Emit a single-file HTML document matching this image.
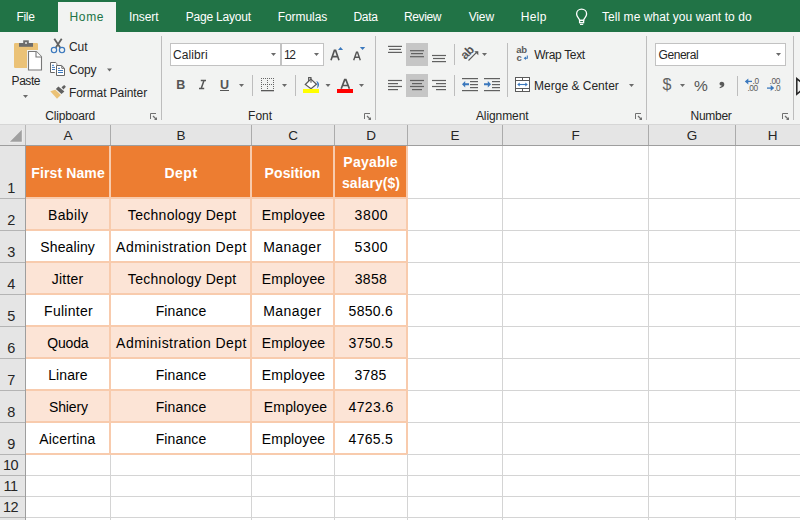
<!DOCTYPE html><html><head><meta charset="utf-8"><style>
html,body{margin:0;padding:0;width:800px;height:520px;overflow:hidden;background:#fff;}
body{position:relative;font-family:"Liberation Sans",sans-serif;}
.t{position:absolute;white-space:nowrap;line-height:20px;z-index:2;}
.c{width:300px;text-align:center;}
.r{position:absolute;}
.ic{position:absolute;left:0;top:0;z-index:1;}
</style></head><body>
<div class="r" style="left:0px;top:0px;width:800px;height:32px;background:#217346;"></div>
<div class="r" style="left:58px;top:2px;width:58px;height:30px;background:#f2f3f2;"></div>
<div class="t" style="left:16.50px;top:6.84px;font-size:12px;color:#ffffff;font-weight:normal;letter-spacing:-0.333px;">File</div>
<div class="t" style="left:129.00px;top:6.84px;font-size:12px;color:#ffffff;font-weight:normal;letter-spacing:-0.100px;">Insert</div>
<div class="t" style="left:185.75px;top:6.84px;font-size:12px;color:#ffffff;font-weight:normal;letter-spacing:-0.200px;">Page Layout</div>
<div class="t" style="left:277.75px;top:6.84px;font-size:12px;color:#ffffff;font-weight:normal;letter-spacing:-0.072px;">Formulas</div>
<div class="t" style="left:353.50px;top:6.84px;font-size:12px;color:#ffffff;font-weight:normal;letter-spacing:-0.333px;">Data</div>
<div class="t" style="left:404.00px;top:6.84px;font-size:12px;color:#ffffff;font-weight:normal;letter-spacing:-0.400px;">Review</div>
<div class="t" style="left:468.75px;top:6.84px;font-size:12px;color:#ffffff;font-weight:normal;letter-spacing:-0.167px;">View</div>
<div class="t" style="left:520.75px;top:6.84px;font-size:12px;color:#ffffff;font-weight:normal;letter-spacing:0.334px;">Help</div>
<div class="t" style="left:602.00px;top:6.84px;font-size:12px;color:#ffffff;font-weight:normal;letter-spacing:0.057px;">Tell me what you want to do</div>
<div class="t" style="left:69.50px;top:6.84px;font-size:12px;color:#217346;font-weight:normal;letter-spacing:0.667px;">Home</div>
<div class="r" style="left:0px;top:32px;width:800px;height:92px;background:#f2f3f2;"></div>
<div class="r" style="left:0px;top:124px;width:800px;height:1px;background:#d6d6d6;"></div>
<div class="r" style="left:161px;top:36px;width:1px;height:84px;background:#bdbdbd;"></div>
<div class="r" style="left:375px;top:36px;width:1px;height:84px;background:#bdbdbd;"></div>
<div class="r" style="left:646px;top:36px;width:1px;height:84px;background:#bdbdbd;"></div>
<div class="r" style="left:793px;top:36px;width:1px;height:84px;background:#bdbdbd;"></div>
<div class="t" style="left:11.60px;top:70.64px;font-size:12px;color:#262626;font-weight:normal;letter-spacing:-0.450px;">Paste</div>
<div class="t" style="left:69.00px;top:36.74px;font-size:12px;color:#262626;font-weight:normal;letter-spacing:-0.100px;">Cut</div>
<div class="t" style="left:69.00px;top:60.04px;font-size:12px;color:#262626;font-weight:normal;letter-spacing:-0.133px;">Copy</div>
<div class="t" style="left:69.00px;top:82.74px;font-size:12px;color:#262626;font-weight:normal;letter-spacing:-0.093px;">Format Painter</div>
<div class="t" style="left:45.30px;top:105.84px;font-size:12px;color:#262626;font-weight:normal;letter-spacing:-0.174px;">Clipboard</div>
<div class="r" style="left:170px;top:43px;width:111px;height:23px;background:#fff;box-sizing:border-box;border:1px solid #c2c2c2;"></div>
<div class="r" style="left:281px;top:43px;width:43px;height:23px;background:#fff;box-sizing:border-box;border:1px solid #c2c2c2;"></div>
<div class="t" style="left:173.00px;top:45.04px;font-size:12px;color:#262626;font-weight:normal;letter-spacing:0.100px;">Calibri</div>
<div class="t" style="left:283.90px;top:45.04px;font-size:12px;color:#262626;font-weight:normal;letter-spacing:-1.400px;">12</div>
<div class="t" style="left:176.20px;top:74.97px;font-size:12.5px;color:#555555;font-weight:bold;letter-spacing:0.000px;">B</div>
<div class="t" style="left:220.00px;top:74.97px;font-size:12.5px;color:#555555;font-weight:bold;letter-spacing:0.000px;">U</div>
<div class="r" style="left:220px;top:90px;width:9px;height:1.2px;background:#555555;"></div>
<div class="r" style="left:252px;top:75px;width:1px;height:21px;background:#bdbdbd;"></div>
<div class="r" style="left:295px;top:75px;width:1px;height:21px;background:#bdbdbd;"></div>
<div class="r" style="left:337px;top:89px;width:16px;height:4px;background:#ff0000;"></div>
<div class="t" style="left:248.10px;top:105.64px;font-size:12px;color:#262626;font-weight:normal;letter-spacing:0.000px;">Font</div>
<div class="r" style="left:406px;top:43px;width:22px;height:23px;background:#c6c6c6;"></div>
<div class="r" style="left:406px;top:74px;width:22px;height:23px;background:#c6c6c6;"></div>
<div class="r" style="left:454px;top:44px;width:1px;height:21px;background:#bdbdbd;"></div>
<div class="r" style="left:454px;top:75px;width:1px;height:21px;background:#bdbdbd;"></div>
<div class="r" style="left:507px;top:43px;width:1px;height:54px;background:#bdbdbd;"></div>
<div class="t" style="left:534.20px;top:44.84px;font-size:12px;color:#262626;font-weight:normal;letter-spacing:-0.325px;">Wrap Text</div>
<div class="t" style="left:534.10px;top:75.64px;font-size:12px;color:#262626;font-weight:normal;letter-spacing:0.000px;">Merge &amp; Center</div>
<div class="t" style="left:475.90px;top:105.59px;font-size:12px;color:#262626;font-weight:normal;letter-spacing:-0.075px;">Alignment</div>
<div class="r" style="left:655px;top:43px;width:131px;height:23px;background:#fff;box-sizing:border-box;border:1px solid #c2c2c2;"></div>
<div class="t" style="left:658.50px;top:44.94px;font-size:12px;color:#262626;font-weight:normal;letter-spacing:-0.434px;">General</div>
<div class="t" style="left:662.60px;top:75.45px;font-size:16px;color:#616161;font-weight:normal;letter-spacing:0.000px;">$</div>
<div class="t" style="left:694.00px;top:75.63px;font-size:15.5px;color:#555555;font-weight:normal;letter-spacing:0.000px;">%</div>
<div class="r" style="left:737px;top:76px;width:1px;height:20px;background:#bdbdbd;"></div>
<div class="t" style="left:690.50px;top:106.04px;font-size:12px;color:#262626;font-weight:normal;letter-spacing:-0.280px;">Number</div>
<div class="r" style="left:0px;top:125px;width:800px;height:20px;background:#e5e5e5;"></div>
<div class="r" style="left:0px;top:145px;width:25px;height:375px;background:#e5e5e5;"></div>
<div class="r" style="left:0px;top:145px;width:800px;height:1px;background:#9e9e9e;"></div>
<div class="r" style="left:25px;top:125px;width:1px;height:20px;background:#b8b8b8;"></div>
<div class="r" style="left:25px;top:145px;width:1px;height:375px;background:#9e9e9e;"></div>
<div class="r" style="left:110px;top:125px;width:1px;height:20px;background:#ababab;"></div>
<div class="r" style="left:251px;top:125px;width:1px;height:20px;background:#ababab;"></div>
<div class="r" style="left:334px;top:125px;width:1px;height:20px;background:#ababab;"></div>
<div class="r" style="left:407px;top:125px;width:1px;height:20px;background:#ababab;"></div>
<div class="r" style="left:502px;top:125px;width:1px;height:20px;background:#ababab;"></div>
<div class="r" style="left:648px;top:125px;width:1px;height:20px;background:#ababab;"></div>
<div class="r" style="left:735px;top:125px;width:1px;height:20px;background:#ababab;"></div>
<div class="t c" style="left:-82.00px;top:126.32px;font-size:13.5px;color:#262626;font-weight:normal;letter-spacing:0.000px;text-indent:0.000px;">A</div>
<div class="t c" style="left:31.00px;top:126.32px;font-size:13.5px;color:#262626;font-weight:normal;letter-spacing:0.000px;text-indent:0.000px;">B</div>
<div class="t c" style="left:143.00px;top:126.32px;font-size:13.5px;color:#262626;font-weight:normal;letter-spacing:0.000px;text-indent:0.000px;">C</div>
<div class="t c" style="left:221.00px;top:126.32px;font-size:13.5px;color:#262626;font-weight:normal;letter-spacing:0.000px;text-indent:0.000px;">D</div>
<div class="t c" style="left:305.00px;top:126.32px;font-size:13.5px;color:#262626;font-weight:normal;letter-spacing:0.000px;text-indent:0.000px;">E</div>
<div class="t c" style="left:425.50px;top:126.32px;font-size:13.5px;color:#262626;font-weight:normal;letter-spacing:0.000px;text-indent:0.000px;">F</div>
<div class="t c" style="left:542.00px;top:126.32px;font-size:13.5px;color:#262626;font-weight:normal;letter-spacing:0.000px;text-indent:0.000px;">G</div>
<div class="t c" style="left:622.50px;top:126.32px;font-size:13.5px;color:#262626;font-weight:normal;letter-spacing:0.000px;text-indent:0.000px;">H</div>
<div class="r" style="left:110px;top:146px;width:1px;height:374px;background:#d4d4d4;"></div>
<div class="r" style="left:251px;top:146px;width:1px;height:374px;background:#d4d4d4;"></div>
<div class="r" style="left:334px;top:146px;width:1px;height:374px;background:#d4d4d4;"></div>
<div class="r" style="left:407px;top:146px;width:1px;height:374px;background:#d4d4d4;"></div>
<div class="r" style="left:502px;top:146px;width:1px;height:374px;background:#d4d4d4;"></div>
<div class="r" style="left:648px;top:146px;width:1px;height:374px;background:#d4d4d4;"></div>
<div class="r" style="left:735px;top:146px;width:1px;height:374px;background:#d4d4d4;"></div>
<div class="r" style="left:26px;top:198px;width:774px;height:1px;background:#d4d4d4;"></div>
<div class="r" style="left:0px;top:198px;width:25px;height:1px;background:#b4b4b4;"></div>
<div class="r" style="left:26px;top:230px;width:774px;height:1px;background:#d4d4d4;"></div>
<div class="r" style="left:0px;top:230px;width:25px;height:1px;background:#b4b4b4;"></div>
<div class="r" style="left:26px;top:262px;width:774px;height:1px;background:#d4d4d4;"></div>
<div class="r" style="left:0px;top:262px;width:25px;height:1px;background:#b4b4b4;"></div>
<div class="r" style="left:26px;top:294px;width:774px;height:1px;background:#d4d4d4;"></div>
<div class="r" style="left:0px;top:294px;width:25px;height:1px;background:#b4b4b4;"></div>
<div class="r" style="left:26px;top:326px;width:774px;height:1px;background:#d4d4d4;"></div>
<div class="r" style="left:0px;top:326px;width:25px;height:1px;background:#b4b4b4;"></div>
<div class="r" style="left:26px;top:358px;width:774px;height:1px;background:#d4d4d4;"></div>
<div class="r" style="left:0px;top:358px;width:25px;height:1px;background:#b4b4b4;"></div>
<div class="r" style="left:26px;top:390px;width:774px;height:1px;background:#d4d4d4;"></div>
<div class="r" style="left:0px;top:390px;width:25px;height:1px;background:#b4b4b4;"></div>
<div class="r" style="left:26px;top:422px;width:774px;height:1px;background:#d4d4d4;"></div>
<div class="r" style="left:0px;top:422px;width:25px;height:1px;background:#b4b4b4;"></div>
<div class="r" style="left:26px;top:454px;width:774px;height:1px;background:#d4d4d4;"></div>
<div class="r" style="left:0px;top:454px;width:25px;height:1px;background:#b4b4b4;"></div>
<div class="r" style="left:26px;top:475px;width:774px;height:1px;background:#d4d4d4;"></div>
<div class="r" style="left:0px;top:475px;width:25px;height:1px;background:#b4b4b4;"></div>
<div class="r" style="left:26px;top:496px;width:774px;height:1px;background:#d4d4d4;"></div>
<div class="r" style="left:0px;top:496px;width:25px;height:1px;background:#b4b4b4;"></div>
<div class="r" style="left:26px;top:517px;width:774px;height:1px;background:#d4d4d4;"></div>
<div class="r" style="left:0px;top:517px;width:25px;height:1px;background:#b4b4b4;"></div>
<div class="t c" style="left:-138.80px;top:178.47px;font-size:14.5px;color:#262626;font-weight:normal;letter-spacing:0.000px;text-indent:0.000px;">1</div>
<div class="t c" style="left:-138.80px;top:210.47px;font-size:14.5px;color:#262626;font-weight:normal;letter-spacing:0.000px;text-indent:0.000px;">2</div>
<div class="t c" style="left:-138.80px;top:242.47px;font-size:14.5px;color:#262626;font-weight:normal;letter-spacing:0.000px;text-indent:0.000px;">3</div>
<div class="t c" style="left:-138.80px;top:274.47px;font-size:14.5px;color:#262626;font-weight:normal;letter-spacing:0.000px;text-indent:0.000px;">4</div>
<div class="t c" style="left:-138.80px;top:306.47px;font-size:14.5px;color:#262626;font-weight:normal;letter-spacing:0.000px;text-indent:0.000px;">5</div>
<div class="t c" style="left:-138.80px;top:338.47px;font-size:14.5px;color:#262626;font-weight:normal;letter-spacing:0.000px;text-indent:0.000px;">6</div>
<div class="t c" style="left:-138.80px;top:370.47px;font-size:14.5px;color:#262626;font-weight:normal;letter-spacing:0.000px;text-indent:0.000px;">7</div>
<div class="t c" style="left:-138.80px;top:402.47px;font-size:14.5px;color:#262626;font-weight:normal;letter-spacing:0.000px;text-indent:0.000px;">8</div>
<div class="t c" style="left:-138.80px;top:434.47px;font-size:14.5px;color:#262626;font-weight:normal;letter-spacing:0.000px;text-indent:0.000px;">9</div>
<div class="t c" style="left:-139.20px;top:455.47px;font-size:14.5px;color:#262626;font-weight:normal;letter-spacing:-0.600px;text-indent:-0.600px;">10</div>
<div class="t c" style="left:-139.20px;top:476.47px;font-size:14.5px;color:#262626;font-weight:normal;letter-spacing:-0.600px;text-indent:-0.600px;">11</div>
<div class="t c" style="left:-139.20px;top:497.47px;font-size:14.5px;color:#262626;font-weight:normal;letter-spacing:-0.600px;text-indent:-0.600px;">12</div>
<div class="r" style="left:26px;top:146px;width:381px;height:52px;background:#ed7d31;"></div>
<div class="r" style="left:26px;top:199px;width:381px;height:31px;background:#fce4d6;"></div>
<div class="r" style="left:26px;top:231px;width:381px;height:31px;background:#fff;"></div>
<div class="r" style="left:26px;top:263px;width:381px;height:31px;background:#fce4d6;"></div>
<div class="r" style="left:26px;top:295px;width:381px;height:31px;background:#fff;"></div>
<div class="r" style="left:26px;top:327px;width:381px;height:31px;background:#fce4d6;"></div>
<div class="r" style="left:26px;top:359px;width:381px;height:31px;background:#fff;"></div>
<div class="r" style="left:26px;top:391px;width:381px;height:31px;background:#fce4d6;"></div>
<div class="r" style="left:26px;top:423px;width:381px;height:31px;background:#fff;"></div>
<div class="r" style="left:109px;top:146px;width:2px;height:308px;background:#f8cbad;"></div>
<div class="r" style="left:250px;top:146px;width:2px;height:308px;background:#f8cbad;"></div>
<div class="r" style="left:333px;top:146px;width:2px;height:308px;background:#f8cbad;"></div>
<div class="r" style="left:406px;top:146px;width:2px;height:308px;background:#f8cbad;"></div>
<div class="r" style="left:26px;top:197px;width:381px;height:2px;background:#f8cbad;"></div>
<div class="r" style="left:26px;top:229px;width:381px;height:2px;background:#f8cbad;"></div>
<div class="r" style="left:26px;top:261px;width:381px;height:2px;background:#f8cbad;"></div>
<div class="r" style="left:26px;top:293px;width:381px;height:2px;background:#f8cbad;"></div>
<div class="r" style="left:26px;top:325px;width:381px;height:2px;background:#f8cbad;"></div>
<div class="r" style="left:26px;top:357px;width:381px;height:2px;background:#f8cbad;"></div>
<div class="r" style="left:26px;top:389px;width:381px;height:2px;background:#f8cbad;"></div>
<div class="r" style="left:26px;top:421px;width:381px;height:2px;background:#f8cbad;"></div>
<div class="r" style="left:26px;top:453px;width:381px;height:2px;background:#f8cbad;"></div>
<div class="t c" style="left:-82.00px;top:163.15px;font-size:14px;color:#fff;font-weight:bold;letter-spacing:0.111px;text-indent:0.111px;">First Name</div>
<div class="t c" style="left:30.76px;top:163.15px;font-size:14px;color:#fff;font-weight:bold;letter-spacing:0.500px;text-indent:0.500px;">Dept</div>
<div class="t c" style="left:142.50px;top:163.15px;font-size:14px;color:#fff;font-weight:bold;letter-spacing:0.085px;text-indent:0.085px;">Position</div>
<div class="t c" style="left:220.50px;top:152.15px;font-size:14px;color:#fff;font-weight:bold;letter-spacing:0.233px;text-indent:0.233px;">Payable</div>
<div class="t c" style="left:221.00px;top:173.15px;font-size:14px;color:#fff;font-weight:bold;letter-spacing:0.050px;text-indent:0.050px;">salary($)</div>
<div class="t c" style="left:-82.00px;top:205.15px;font-size:14px;color:#000;font-weight:normal;letter-spacing:0.400px;text-indent:0.400px;">Babily</div>
<div class="t c" style="left:32.00px;top:205.15px;font-size:14px;color:#000;font-weight:normal;letter-spacing:0.285px;text-indent:0.285px;">Technology Dept</div>
<div class="t c" style="left:143.50px;top:205.15px;font-size:14px;color:#000;font-weight:normal;letter-spacing:0.142px;text-indent:0.142px;">Employee</div>
<div class="t c" style="left:221.10px;top:205.15px;font-size:14px;color:#000;font-weight:normal;letter-spacing:0.600px;text-indent:0.600px;">3800</div>
<div class="t c" style="left:-82.40px;top:237.15px;font-size:14px;color:#000;font-weight:normal;letter-spacing:0.114px;text-indent:0.114px;">Shealiny</div>
<div class="t c" style="left:31.30px;top:237.15px;font-size:14px;color:#000;font-weight:normal;letter-spacing:0.455px;text-indent:0.455px;">Administration Dept</div>
<div class="t c" style="left:142.20px;top:237.15px;font-size:14px;color:#000;font-weight:normal;letter-spacing:0.467px;text-indent:0.467px;">Manager</div>
<div class="t c" style="left:221.10px;top:237.15px;font-size:14px;color:#000;font-weight:normal;letter-spacing:0.600px;text-indent:0.600px;">5300</div>
<div class="t c" style="left:-82.50px;top:269.15px;font-size:14px;color:#000;font-weight:normal;letter-spacing:0.200px;text-indent:0.200px;">Jitter</div>
<div class="t c" style="left:32.00px;top:269.15px;font-size:14px;color:#000;font-weight:normal;letter-spacing:0.285px;text-indent:0.285px;">Technology Dept</div>
<div class="t c" style="left:143.50px;top:269.15px;font-size:14px;color:#000;font-weight:normal;letter-spacing:0.142px;text-indent:0.142px;">Employee</div>
<div class="t c" style="left:220.80px;top:269.15px;font-size:14px;color:#000;font-weight:normal;letter-spacing:0.267px;text-indent:0.267px;">3858</div>
<div class="t c" style="left:-81.60px;top:301.15px;font-size:14px;color:#000;font-weight:normal;letter-spacing:0.286px;text-indent:0.286px;">Fulinter</div>
<div class="t c" style="left:31.00px;top:301.15px;font-size:14px;color:#000;font-weight:normal;letter-spacing:0.133px;text-indent:0.133px;">Finance</div>
<div class="t c" style="left:142.20px;top:301.15px;font-size:14px;color:#000;font-weight:normal;letter-spacing:0.467px;text-indent:0.467px;">Manager</div>
<div class="t c" style="left:220.70px;top:301.15px;font-size:14px;color:#000;font-weight:normal;letter-spacing:0.280px;text-indent:0.280px;">5850.6</div>
<div class="t c" style="left:-82.10px;top:333.15px;font-size:14px;color:#000;font-weight:normal;letter-spacing:-0.150px;text-indent:-0.150px;">Quoda</div>
<div class="t c" style="left:31.30px;top:333.15px;font-size:14px;color:#000;font-weight:normal;letter-spacing:0.455px;text-indent:0.455px;">Administration Dept</div>
<div class="t c" style="left:143.50px;top:333.15px;font-size:14px;color:#000;font-weight:normal;letter-spacing:0.142px;text-indent:0.142px;">Employee</div>
<div class="t c" style="left:220.70px;top:333.15px;font-size:14px;color:#000;font-weight:normal;letter-spacing:0.280px;text-indent:0.280px;">3750.5</div>
<div class="t c" style="left:-82.10px;top:365.15px;font-size:14px;color:#000;font-weight:normal;letter-spacing:0.120px;text-indent:0.120px;">Linare</div>
<div class="t c" style="left:31.00px;top:365.15px;font-size:14px;color:#000;font-weight:normal;letter-spacing:0.133px;text-indent:0.133px;">Finance</div>
<div class="t c" style="left:143.50px;top:365.15px;font-size:14px;color:#000;font-weight:normal;letter-spacing:0.142px;text-indent:0.142px;">Employee</div>
<div class="t c" style="left:220.50px;top:365.15px;font-size:14px;color:#000;font-weight:normal;letter-spacing:0.200px;text-indent:0.200px;">3785</div>
<div class="t c" style="left:-81.50px;top:397.15px;font-size:14px;color:#000;font-weight:normal;letter-spacing:-0.120px;text-indent:-0.120px;">Shiery</div>
<div class="t c" style="left:31.00px;top:397.15px;font-size:14px;color:#000;font-weight:normal;letter-spacing:0.133px;text-indent:0.133px;">Finance</div>
<div class="t c" style="left:145.50px;top:397.15px;font-size:14px;color:#000;font-weight:normal;letter-spacing:0.142px;text-indent:0.142px;">Employee</div>
<div class="t c" style="left:220.90px;top:397.15px;font-size:14px;color:#000;font-weight:normal;letter-spacing:0.360px;text-indent:0.360px;">4723.6</div>
<div class="t c" style="left:-82.80px;top:429.15px;font-size:14px;color:#000;font-weight:normal;letter-spacing:0.200px;text-indent:0.200px;">Aicertina</div>
<div class="t c" style="left:31.00px;top:429.15px;font-size:14px;color:#000;font-weight:normal;letter-spacing:0.133px;text-indent:0.133px;">Finance</div>
<div class="t c" style="left:143.50px;top:429.15px;font-size:14px;color:#000;font-weight:normal;letter-spacing:0.142px;text-indent:0.142px;">Employee</div>
<div class="t c" style="left:220.70px;top:429.15px;font-size:14px;color:#000;font-weight:normal;letter-spacing:0.280px;text-indent:0.280px;">4765.5</div>
<svg class="ic" width="800" height="520" viewBox="0 0 800 520"><path d="M579.6 20.4 C579.4 18.3 576.6 16.9 576.6 14 C576.6 11.2 578.8 9.2 581.6 9.2 C584.4 9.2 586.6 11.2 586.6 14 C586.6 16.9 583.8 18.3 583.6 20.4 Z" fill="none" stroke="#fff" stroke-width="1.3"/><rect x="579.6" y="20.4" width="4" height="2.3" fill="none" stroke="#fff" stroke-width="1.3"/><path d="M580 24.4 H583.2" stroke="#fff" stroke-width="1.1"/><path d="M150.5 119 V113.5 H156" fill="none" stroke="#707070" stroke-width="1"/><path d="M153 116 L156.5 119.5" stroke="#707070" stroke-width="1.2"/><path d="M154 120 H157 V117 Z" fill="#707070"/><path d="M364.5 119 V113.5 H370" fill="none" stroke="#707070" stroke-width="1"/><path d="M367 116 L370.5 119.5" stroke="#707070" stroke-width="1.2"/><path d="M368 120 H371 V117 Z" fill="#707070"/><path d="M635.5 119 V113.5 H641" fill="none" stroke="#707070" stroke-width="1"/><path d="M638 116 L641.5 119.5" stroke="#707070" stroke-width="1.2"/><path d="M639 120 H642 V117 Z" fill="#707070"/><path d="M782.5 119 V113.5 H788" fill="none" stroke="#707070" stroke-width="1"/><path d="M785 116 L788.5 119.5" stroke="#707070" stroke-width="1.2"/><path d="M786 120 H789 V117 Z" fill="#707070"/><rect x="14" y="43" width="24" height="25" rx="1.2" fill="#ebc277"/><path d="M19 43 H33 V46.8 H19 Z" fill="#6d6d6d"/><path d="M23.2 40.3 H28.8 V43.5 H23.2 Z" fill="#6d6d6d"/><rect x="25.2" y="42.2" width="1.6" height="1.6" fill="#fff"/><path d="M27 50 H38.5 V69.5 H27 Z" fill="#f2f3f2"/><path d="M28.5 51.5 H36.3 L41.5 56.7 V70 H28.5 Z" fill="#fff" stroke="#787878" stroke-width="1.1"/><path d="M36 51.5 V57 H41.5" fill="#fff" stroke="#787878" stroke-width="1.1"/><path d="M23 95 H28 L25.5 98 Z" fill="#6a6a6a"/><path d="M54.3 38.8 L60.3 47.8 M61.7 38.8 L55.7 47.8" stroke="#616161" stroke-width="1.8"/><circle cx="54" cy="50.1" r="2.65" fill="none" stroke="#3b78bd" stroke-width="1.2"/><circle cx="62" cy="50.1" r="2.65" fill="none" stroke="#3b78bd" stroke-width="1.2"/><path d="M54.8 72.5 H50.5 V62.5 H55.7 L56.8 63.6 V65" fill="#fff" stroke="#666" stroke-width="1"/><rect x="51" y="63" width="5.3" height="9" fill="#fff"/><path d="M52 65.3 H54 M52 67.4 H55 M52 69.5 H55" stroke="#3b78bd" stroke-width="1"/><path d="M56.5 65.5 H61.7 L64.5 68.3 V75.5 H56.5 Z" fill="#fff" stroke="#666" stroke-width="1"/><path d="M61.8 66 V68.3 H64" fill="none" stroke="#666" stroke-width="1"/><path d="M58 68.4 H60 M58 70.5 H63 M58 72.5 H63" stroke="#3b78bd" stroke-width="1"/><path d="M107 68.5 H112 L109.5 71.5 Z" fill="#6a6a6a"/><path d="M50.3 91.2 L55.3 89.7 L60.9 94.9 L57 98.7 Z" fill="#ebc277"/><path d="M55.9 89 L58.4 86.4 L64.4 91.6 L61.5 94.1 Z" fill="#616161"/><path d="M61.5 87.2 L64.2 85.1 L65.9 86.8 L63.4 89.5 Z" fill="#616161"/><path d="M271 53 H276 L273.5 56 Z" fill="#6a6a6a"/><path d="M314 53 H319 L316.5 56 Z" fill="#6a6a6a"/><path d="M331 60.2 L334.4 50.4 H335.6 L339 60.2 M332.6 56.6 H337.4" fill="none" stroke="#555" stroke-width="1.6"/><path d="M338 49.9 L340.55 46.9 L343.1 49.9 Z" fill="#3b78bd"/><path d="M353.7 60.2 L356.5 52.2 H357.5 L360.3 60.2 M355 57.2 H359" fill="none" stroke="#555" stroke-width="1.4"/><path d="M359.9 46.9 H365.2 L362.55 49.9 Z" fill="#3b78bd"/><path d="M200.8 80.6 H206 M199 88.4 H204.2 M204 80.6 L201.2 88.4" stroke="#555" stroke-width="1.5" fill="none"/><path d="M239 84 H244 L241.5 87 Z" fill="#6a6a6a"/><g fill="#666"><rect x="261" y="78" width="1" height="1"/><rect x="261" y="80" width="1" height="1"/><rect x="261" y="82" width="1" height="1"/><rect x="261" y="84" width="1" height="1"/><rect x="261" y="86" width="1" height="1"/><rect x="261" y="88" width="1" height="1"/><rect x="263" y="78" width="1" height="1"/><rect x="263" y="84" width="1" height="1"/><rect x="265" y="78" width="1" height="1"/><rect x="265" y="84" width="1" height="1"/><rect x="267" y="78" width="1" height="1"/><rect x="267" y="80" width="1" height="1"/><rect x="267" y="82" width="1" height="1"/><rect x="267" y="84" width="1" height="1"/><rect x="267" y="86" width="1" height="1"/><rect x="267" y="88" width="1" height="1"/><rect x="269" y="78" width="1" height="1"/><rect x="269" y="84" width="1" height="1"/><rect x="271" y="78" width="1" height="1"/><rect x="271" y="84" width="1" height="1"/><rect x="273" y="78" width="1" height="1"/><rect x="273" y="80" width="1" height="1"/><rect x="273" y="82" width="1" height="1"/><rect x="273" y="84" width="1" height="1"/><rect x="273" y="86" width="1" height="1"/><rect x="273" y="88" width="1" height="1"/></g><rect x="261" y="90" width="13" height="1.3" fill="#5a5a5a"/><path d="M282 84 H287 L284.5 87 Z" fill="#6a6a6a"/><path d="M305.3 84.5 L310.8 79 L316.5 84.3 L311 88.8 Z" fill="#fff" stroke="#5a5a5a" stroke-width="1.2"/><path d="M308.6 81.3 V77.6 H311 V82.8" stroke="#5a5a5a" stroke-width="1.1" fill="none"/><path d="M316.3 80.9 C319.6 82 320.2 86 316.9 88.3 C317.9 85.6 317.6 83.2 316.3 80.9 Z" fill="#3b78bd"/><rect x="303" y="89" width="16" height="4" fill="#ffff00"/><path d="M325.5 84 H330.5 L328.0 87 Z" fill="#6a6a6a"/><path d="M341.2 88.8 L344.7 79.7 H345.9 L349.4 88.8 M342.8 85.5 H347.8" fill="none" stroke="#555" stroke-width="1.7"/><path d="M359 84 H364 L361.5 87 Z" fill="#6a6a6a"/><rect x="388" y="45.8" width="14" height="1.2" fill="#616161"/><rect x="389" y="48.8" width="12" height="1.2" fill="#616161"/><rect x="388" y="51.8" width="14" height="1.2" fill="#616161"/><rect x="410" y="50.1" width="14" height="1.2" fill="#616161"/><rect x="411" y="53" width="12" height="1.2" fill="#616161"/><rect x="410" y="56.1" width="14" height="1.2" fill="#616161"/><rect x="432" y="54.9" width="14" height="1.2" fill="#616161"/><rect x="433" y="57.9" width="12" height="1.2" fill="#616161"/><rect x="432" y="61" width="14" height="1.2" fill="#616161"/><rect x="388" y="79.9" width="14" height="1.2" fill="#616161"/><rect x="388" y="83" width="10" height="1.2" fill="#616161"/><rect x="388" y="85.9" width="14" height="1.2" fill="#616161"/><rect x="388" y="89" width="10" height="1.2" fill="#616161"/><rect x="410" y="79.9" width="14" height="1.2" fill="#616161"/><rect x="412" y="83" width="10" height="1.2" fill="#616161"/><rect x="410" y="85.9" width="14" height="1.2" fill="#616161"/><rect x="412" y="89" width="10" height="1.2" fill="#616161"/><rect x="432" y="79.9" width="14" height="1.2" fill="#616161"/><rect x="436" y="83" width="10" height="1.2" fill="#616161"/><rect x="432" y="85.9" width="14" height="1.2" fill="#616161"/><rect x="436" y="89" width="10" height="1.2" fill="#616161"/><text x="0" y="0" font-family="Liberation Sans" font-size="12" font-weight="bold" fill="#555" letter-spacing="-0.3" transform="translate(465.2 60) rotate(-45)">ab</text><path d="M468.5 60.5 L477.3 51.7" fill="none" stroke="#5a5a5a" stroke-width="1.1"/><path d="M474.3 51.2 H478.3 V55.2 Z" fill="#5a5a5a"/><path d="M482 53 H487 L484.5 56 Z" fill="#6a6a6a"/><rect x="462" y="78" width="16" height="1.2" fill="#616161"/><rect x="470" y="81" width="8" height="1.2" fill="#616161"/><rect x="470" y="84" width="8" height="1.2" fill="#616161"/><rect x="470" y="87" width="8" height="1.2" fill="#616161"/><rect x="462" y="90" width="16" height="1.2" fill="#616161"/><path d="M462 84.2 L465.2 81 V83.3 H469 V85.3 H465.2 V87.5 Z" fill="#3b78bd"/><rect x="484" y="78" width="16" height="1.2" fill="#616161"/><rect x="492" y="81" width="8" height="1.2" fill="#616161"/><rect x="492" y="84" width="8" height="1.2" fill="#616161"/><rect x="492" y="87" width="8" height="1.2" fill="#616161"/><rect x="484" y="90" width="16" height="1.2" fill="#616161"/><path d="M491 84.2 L487.8 81 V83.3 H484 V85.3 H487.8 V87.5 Z" fill="#3b78bd"/><text x="516.3" y="53.3" font-family="Liberation Sans" font-size="9.5" font-weight="bold" fill="#5a5a5a" letter-spacing="-0.3">ab</text><text x="516.6" y="60.8" font-family="Liberation Sans" font-size="9.5" font-weight="bold" fill="#5a5a5a">c</text><path d="M527.3 55.5 V58.3 H524.5" fill="none" stroke="#3b78bd" stroke-width="1.1"/><path d="M526 56.6 L523.7 58.3 L526 60 Z" fill="#3b78bd"/><rect x="515.5" y="77.5" width="14" height="14" fill="#fff" stroke="#5a5a5a" stroke-width="1"/><path d="M515.5 80.5 H529.5 M515.5 88.5 H529.5 M522.5 77.5 V80.5 M522.5 88.5 V91.5" stroke="#5a5a5a" stroke-width="1"/><path d="M518 84.5 H527" fill="none" stroke="#3b78bd" stroke-width="1.1"/><path d="M517.2 84.5 L519.7 82.5 V86.5 Z M527.8 84.5 L525.3 82.5 V86.5 Z" fill="#3b78bd"/><path d="M629 84 H634 L631.5 87 Z" fill="#6a6a6a"/><path d="M776 53 H781 L778.5 56 Z" fill="#6a6a6a"/><path d="M680 84 H685 L682.5 87 Z" fill="#6a6a6a"/><path d="M721.8 81.8 C723.4 81.8 724.3 82.9 724.3 84.4 C724.3 86 723 87.4 719.8 88.2 L719.5 87.4 C720.9 86.8 721.6 86.2 721.7 85.6 C720.4 85.6 719.5 84.8 719.5 83.7 C719.5 82.6 720.5 81.8 721.8 81.8 Z" fill="#5a5a5a"/><g font-family="Liberation Sans" font-size="8.3" fill="#5a5a5a" letter-spacing="-0.4"><text x="752.6" y="84.2">.0</text><text x="747.4" y="90.7">.00</text><text x="769.6" y="84.2">.00</text><text x="774.2" y="90.7">.0</text></g><path d="M746 81.4 H752" fill="none" stroke="#3b78bd" stroke-width="1.3"/><path d="M744.8 81.4 L748.3 78.4 V84.4 Z" fill="#3b78bd"/><path d="M767 88.1 H773" fill="none" stroke="#3b78bd" stroke-width="1.3"/><path d="M774.2 88.1 L770.7 85.1 V91.1 Z" fill="#3b78bd"/><path d="M801 82.2 L796.8 78.6 V94.2 L801 90.6" fill="none" stroke="#222" stroke-width="1.5"/><path d="M8.6 142.6 L22.7 128.5 V142.6 Z" fill="#f0f0f0"/><path d="M9.9 141.7 L21.8 129.8 V141.7 Z" fill="#a0a0a0"/></svg></body></html>
